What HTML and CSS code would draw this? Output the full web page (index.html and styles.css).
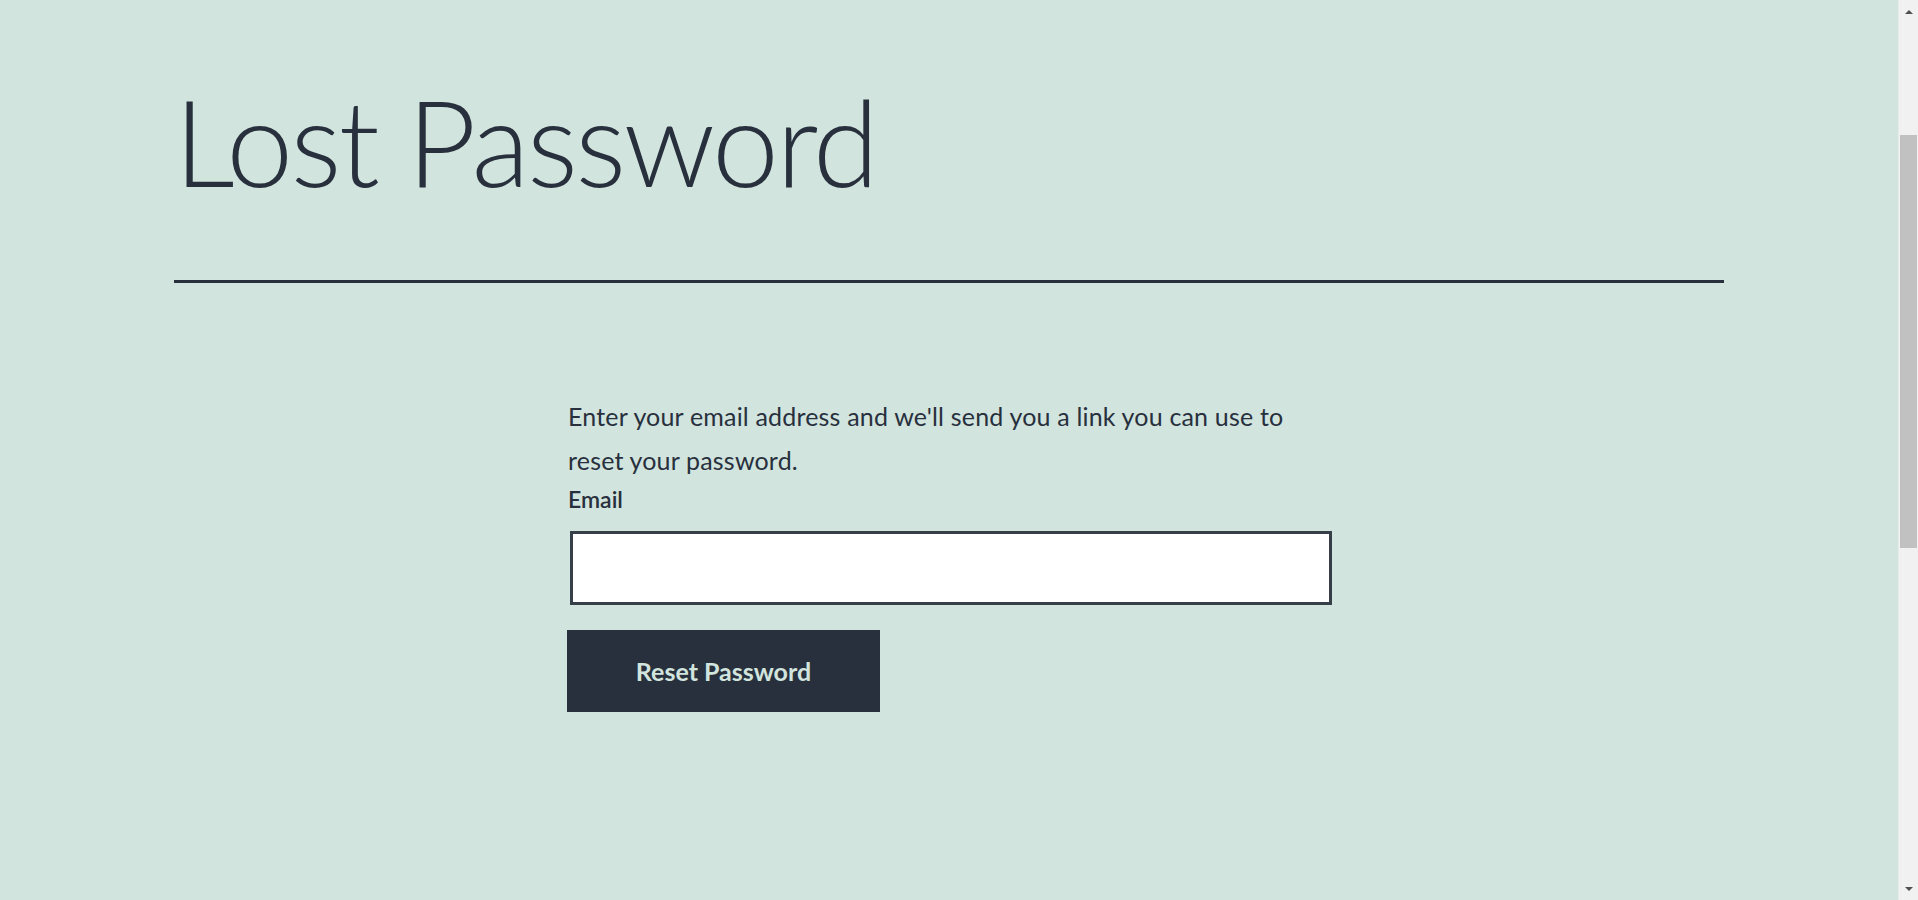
FILE: index.html
```html
<!DOCTYPE html>
<html lang="en">
<head>
<meta charset="utf-8">
<title>Lost Password</title>
<link rel="stylesheet" href="styles.css">
</head>
<body>
<div class="page">
  <main class="site-main">
    <header class="entry-header">
      <h1 class="entry-title">Lost Password</h1>
    </header>
    <div class="entry-content">
      <form class="lost-password-form">
        <p class="intro">Enter your email address and we'll send you a link you can use to reset your password.</p>
        <label class="field-label" for="user_login">Email</label>
        <input class="field-input" type="text" id="user_login" name="user_login">
        <button class="btn-reset" type="submit">Reset Password</button>
      </form>
    </div>
  </main>
</div>
<div class="scrollbar" aria-hidden="true">
  <div class="sb-btn"><span class="sb-arrow-up"></span></div>
  <div class="sb-track"><div class="sb-thumb"></div></div>
  <div class="sb-btn"><span class="sb-arrow-down"></span></div>
</div>
</body>
</html>
```
FILE: styles.css
```css
html, body {
  margin: 0;
  padding: 0;
  height: 100%;
}
body {
  display: flex;
  overflow: hidden;
  background: #d1e4dd;
  color: #28303d;
  font-family: Lato, "Open Sans", sans-serif;
}
.page {
  flex: 1;
  min-width: 0;
}
.site-main {
  padding-top: 69px;
}
.entry-header {
  max-width: 1550px;
  margin: 0 auto;
  border-bottom: 3px solid #28303d;
  padding-bottom: 67px;
}
.entry-title {
  margin: 0;
  font-size: 120px;
  font-weight: 300;
  line-height: 1.2;
  letter-spacing: -2.7px;
}
.entry-content {
  max-width: 762px;
  margin: 0 auto;
  padding-top: 112px;
}
.lost-password-form {
  display: flex;
  flex-direction: column;
  align-items: flex-start;
}
.intro {
  margin: 0;
  font-size: 25px;
  line-height: 43.75px;
  letter-spacing: 0.18px;
}
.field-label {
  font-size: 23px;
  font-weight: 600;
  line-height: 34.5px;
  margin-top: -1px;
}
.field-input {
  box-sizing: border-box;
  width: 762px;
  height: 74px;
  margin: 15px 0 0 2px;
  border: 3px solid #363f47;
  border-radius: 0;
  background: #ffffff;
  padding: 0 16px;
  font: inherit;
  font-size: 25px;
  outline: none;
}
.btn-reset {
  box-sizing: border-box;
  width: 313px;
  height: 82px;
  margin-top: 25px;
  margin-left: -1px;
  padding: 0;
  border: 0;
  border-radius: 0;
  background: #28303d;
  color: #d1e4dd;
  font-family: Lato, "Open Sans", sans-serif;
  font-size: 25px;
  font-weight: 700;
  line-height: 82px;
  text-align: center;
}

/* browser scrollbar */
.scrollbar {
  width: 20px;
  flex: none;
  height: 100%;
  display: flex;
  flex-direction: column;
  background: #f1f1f1;
  border-left: 1px solid #e6ecea;
  box-sizing: border-box;
}
.sb-btn {
  height: 17px;
  flex: none;
  display: flex;
  align-items: center;
  justify-content: center;
}
.sb-arrow-up,
.sb-arrow-down {
  width: 0;
  height: 0;
  border-left: 4px solid transparent;
  border-right: 4px solid transparent;
}
.sb-arrow-up {
  border-bottom: 4px solid #505050;
  margin-top: 6px;
}
.sb-arrow-down {
  border-top: 4px solid #505050;
  margin-bottom: 6px;
}
.sb-track {
  flex: 1;
  padding-top: 118px;
}
.sb-thumb {
  height: 413px;
  margin: 0 1px 0 1px;
  background: #c1c1c1;
}
```
